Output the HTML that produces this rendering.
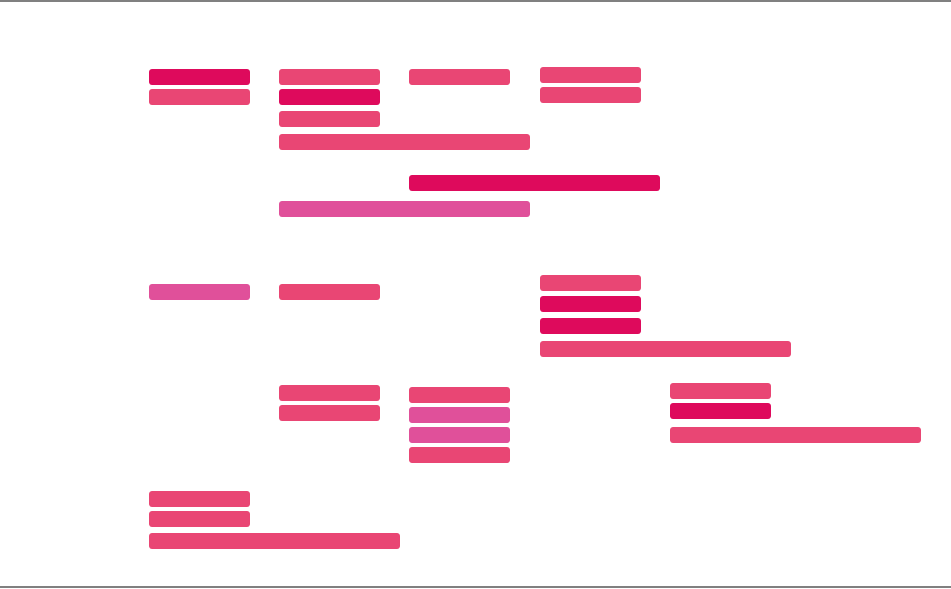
<!DOCTYPE html><html><head><style>
body{margin:0;width:951px;height:589px;background:#fff;position:relative;overflow:hidden}
.l{position:absolute;left:0;width:951px;height:2px;background:#808080}
b{position:absolute;height:16px;width:101px;border-radius:3px;background:#e94674}
.d{background:#de0a5c}.p{background:#e0509a}.w{width:251px}
</style></head><body>
<div class="l" style="top:0"></div><div class="l" style="top:586px"></div>
<b class="d" style="left:149px;top:69px"></b>
<b style="left:149px;top:89px"></b>
<b style="left:279px;top:69px"></b>
<b class="d" style="left:279px;top:89px"></b>
<b style="left:279px;top:111px"></b>
<b class="w" style="left:279px;top:134px"></b>
<b style="left:409px;top:69px"></b>
<b style="left:540px;top:67px"></b>
<b style="left:540px;top:87px"></b>
<b class="d w" style="left:409px;top:175px"></b>
<b class="p w" style="left:279px;top:201px"></b>
<b class="p" style="left:149px;top:284px"></b>
<b style="left:279px;top:284px"></b>
<b style="left:540px;top:275px"></b>
<b class="d" style="left:540px;top:296px"></b>
<b class="d" style="left:540px;top:318px"></b>
<b class="w" style="left:540px;top:341px"></b>
<b style="left:279px;top:385px"></b>
<b style="left:279px;top:405px"></b>
<b style="left:409px;top:387px"></b>
<b class="p" style="left:409px;top:407px"></b>
<b class="p" style="left:409px;top:427px"></b>
<b style="left:409px;top:447px"></b>
<b style="left:670px;top:383px"></b>
<b class="d" style="left:670px;top:403px"></b>
<b class="w" style="left:670px;top:427px"></b>
<b style="left:149px;top:491px"></b>
<b style="left:149px;top:511px"></b>
<b class="w" style="left:149px;top:533px"></b>
</body></html>
